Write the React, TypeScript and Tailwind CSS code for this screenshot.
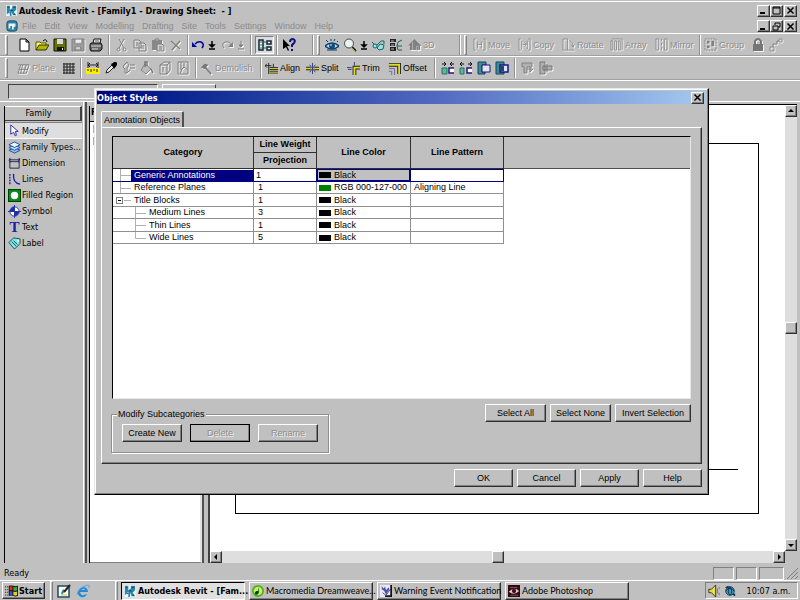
import { useState, type ReactNode } from "react"
import clsx from "clsx"

const raised = "border border-t-white border-l-white border-r-[#303030] border-b-[#303030] shadow-[inset_-1px_-1px_0_#808080]"
const sunken = "border border-t-[#808080] border-l-[#808080] border-r-white border-b-white"
const tahoma = "font-['DejaVu_Sans_Condensed','DejaVu_Sans',sans-serif]"
const msSans = "font-['Liberation_Sans',Arial,sans-serif]"
const disabledText = "text-[#8c8c8c] [text-shadow:1px_1px_0_#f4f4f4]"

type IconName = keyof typeof icons

const icons = {
    newFile: <path d="M3 1h6l3 3v9H3z M9 1v3h3" fill="#fff" stroke="#000" />,
    open: <><path d="M1 12V4h4l1 1h5v2" fill="#ffff60" stroke="#555500" /><path d="M1 12l3-5h10l-3 5z" fill="#b5b500" stroke="#333300" /><path d="M8 3q3-3 4 1" fill="none" stroke="#000" /></>,
    save: <><path d="M1 1h12v12H1z" fill="#6b7300" stroke="#111" /><path d="M4 1h6v5H4z" fill="#d8d8d8" /><path d="M4 9h7v4H4z" fill="#111" /><path d="M9 10h1v2H9z" fill="#fff" /></>,
    saveGray: <><path d="M1 1h12v12H1z M4 1v5h7V1 M4 13V9h6v4" fill="#a0a0a0" stroke="#808080" /><path d="M5 3h5M5 10h4" stroke="#fff" /></>,
    print: <><path d="M4 5l1-4h7l-1 4" fill="#eee" stroke="#111" /><path d="M2 5h10l1 2v4l-2 2H2l-1-2V7z" fill="#666" stroke="#111" /><path d="M2 8h10M3 11h6" stroke="#ddd" /><path d="M6 3h4" stroke="#555" /></>,
    cut: <><path d="M4 1l5 9M9 1L4 10" fill="none" stroke="#808080" /><circle cx="3.500" cy="11.500" r="1.500" fill="none" stroke="#808080" /><circle cx="9.500" cy="11.500" r="1.500" fill="none" stroke="#808080" /></>,
    copy: <path d="M1 2h5l2 2v6H1z M6 5h5l2 2v6H6z M3 5h2M3 7h2M8 8h3M8 10h3" fill="none" stroke="#808080" />,
    paste: <><path d="M1 2h10v10H1z" fill="#888" /><path d="M4 1h4v2H4z" fill="#c0c0c0" stroke="#808080" /><path d="M6 6h5l2 2v5H6z M8 9h3M8 11h3" fill="#ccc" stroke="#808080" /></>,
    remove: <path d="M2 3l9 8M11 3L3 12" stroke="#808080" strokeWidth="1.500" />,
    undo: <><path d="M4 6q3-3 6-2q4 2 1 6" fill="none" stroke="#0000a0" strokeWidth="1.500" /><path d="M1 4v5h5z" fill="#0000a0" /></>,
    redo: <><path d="M11 7Q10 3 5 4Q1 6 4 10" fill="none" stroke="#808080" /><path d="M13 4v5H8z" fill="#808080" /></>,
    down: <path d="M7 3v4M5 7h4L7 9zM4 11h6" fill="#000" stroke="#000" strokeWidth="1.500" />,
    downGray: <path d="M7 3v4M5 7h4L7 9zM4 11h6" fill="#808080" stroke="#808080" />,
    tree: <><path d="M1 2h4v10H1z M9 3h4v3H9z M9 9h4v3H9z" fill="#fff" stroke="#123" strokeWidth="1.500" /><path d="M6 4h3M6 10h3M2 4h2M2 7h2M2 10h2" stroke="#0b6b60" /></>,
    help: <><path d="M1 1v10l3-2 2 4 1-1-2-4h3z" fill="#000" /><path d="M8 4q0-3 3-3q3 1 1 4l-2 2v2M10 11v2" fill="none" stroke="#101080" strokeWidth="2" /></>,
    eye: <><path d="M0 8q7-6 14 0q-7 6-14 0z" fill="#c9e9f5" stroke="#103e66" strokeWidth="1.500" /><circle cx="7" cy="8" r="3" fill="#124b80" /><circle cx="6" cy="7" r="1" fill="#7fc8e8" /><path d="M3 4L1 2M6 3V1M9 3l1-2M12 4l1-1M2 12h10" stroke="#103e66" /></>,
    magnifier: <><path d="M9 9l4 4" stroke="#222" strokeWidth="2" /><circle cx="6" cy="5.500" r="4.500" fill="#e8f4f0" stroke="#444" /><path d="M8 9l4 4" stroke="#b59a20" /></>,
    glasses: <><path d="M1 4l3 3M6 7l4-4h3v3" fill="none" stroke="#0a6b6b" /><circle cx="4" cy="8" r="2" fill="#9fe0dd" stroke="#0a6b6b" /><path d="M6 10l3-4 4 1-1 4-4 1z" fill="#9fe0dd" stroke="#0a6b6b" /></>,
    details: <><path d="M1 1h6v3H1zM1 5h5v3H1zM1 9h6v4H1z" fill="#222" /><path d="M13 2L9 4l-1 4 1 4M8 8h5M9 12h4" fill="none" stroke="#156058" /><path d="M2 3h3M2 7h3M2 11h3" stroke="#bbb" /></>,
    house: <><path d="M0 8l7-7 7 7-1 1v4H2V8z" fill="#808080" /><path d="M5 4v9M9 9h2v4H9z" stroke="#b5b5b5" fill="#666" /></>,
    move: <path d="M3 1H1v12h2M11 1h2v12h-2M5 4v7M9 4v7M5 7h4" fill="none" stroke="#909090" />,
    copyTool: <path d="M3 1H1v12h2M11 1h2v12h-2M4 3v9M10 3v9M5 7h4M7 5l2 2-2 2" fill="none" stroke="#909090" />,
    rotate: <path d="M1 1v12h12M1 1h5v12M8 3q4 1 4 7M10 8l2 2 1-3" fill="none" stroke="#909090" />,
    array: <path d="M1 3h2v10H1zM5 3h2v10H5zM9 3h2v10H9zM2 1h11v12" fill="none" stroke="#909090" />,
    mirror: <path d="M4 1H1v12h3zM10 1h3v12h-3zM7 1v2M7 5v3M7 10v3" fill="none" stroke="#909090" />,
    group: <><path d="M1 1h12v12H1z" fill="none" stroke="#808080" strokeDasharray="2 1" /><path d="M3 3h3v3H3zM8 3h3v6H8zM3 8h3v3H3z" fill="#808080" /></>,
    lock: <><path d="M2 6h10v7H2z" fill="#777" /><path d="M4 6V3q3-4 6 0v3" fill="none" stroke="#777" strokeWidth="2" /></>,
    link: <><path d="M1 9h4v4H1zM10 1h3v3h-3z" fill="none" stroke="#909090" /><path d="M4 9V6h4V3h2" fill="none" stroke="#808080" /></>,
    plane: <path d="M1 12L4 3h9l-3 9zM3 8h9M6 3L4 12M10 3L7 12M1 3h3" fill="none" stroke="#808080" />,
    grid: <path d="M1 3h12M1 6h12M1 9h12M1 12h12M2 2v11M5 2v11M8 2v11M11 2v11" stroke="#222" fill="none" />,
    ruler: <><path d="M0 7h14v6H0z" fill="#ffee00" /><path d="M2 1v6M12 1v6M2 4h10M4 2L2 4l2 2M10 2l2 2-2 2M2 8v2M5 8v3M8 8v2M11 8v3" fill="none" stroke="#222" /></>,
    dropper: <><path d="M2 12l1-3 5-5 2 2-5 5z" fill="#eee" stroke="#222" /><path d="M7 3l2-1 1-1h2l1 1v2l-3 4z" fill="#000" /></>,
    matchProps: <path d="M2 4l3-3 2 3-2 3v5H3V8L1 6zM8 4h5M8 7h5M5 12l3-3" fill="none" stroke="#808080" />,
    paint: <><path d="M5 3l6 5-5 5-5-4z" fill="#bbb" stroke="#808080" /><path d="M5 6V1h2v4M11 8l2 4" fill="none" stroke="#777" strokeWidth="1.500" /></>,
    linework: <path d="M2 4l4-3h6v8l-3 4H2zM2 4h7v9M9 4l3-3M5 6v5" fill="none" stroke="#808080" />,
    section: <path d="M2 1h10v12H2zM5 1v8l3-3 4 3M4 12l2-3M8 2v4" fill="none" stroke="#808080" />,
    hammer: <><path d="M1 6l4-4 4 1-2 2-1 3z" fill="#777" /><path d="M6 6l6 7" stroke="#808080" strokeWidth="2" /></>,
    align: <><path d="M4 1v12M0 4h7M9 2v4M0 4l2-2M0 4l2 2" stroke="#222" fill="none" /><path d="M5 7h9M5 11h9" stroke="#333" strokeWidth="3" /><path d="M5 7h9M5 11h9" stroke="#e0dc20" /></>,
    split: <><path d="M0 7h5M9 7h5" stroke="#222" strokeWidth="4" /><path d="M0 7h5M9 7h5" stroke="#e0dc20" strokeWidth="1.500" /><path d="M7 1v12M4 3l6 8M10 3L4 11" stroke="#333a80" /></>,
    trim: <><path d="M8 14V6h6" fill="none" stroke="#222" strokeWidth="4" /><path d="M8 14V6h6" fill="none" stroke="#e0dc20" strokeWidth="2" /><path d="M0 6h5M8 0v4M1 8h4" stroke="#333a80" /></>,
    offset: <><path d="M1 3h11v10" fill="none" stroke="#222" strokeWidth="4" /><path d="M1 3h11v10" fill="none" stroke="#e0dc20" strokeWidth="2" /><path d="M1 7h6v7M1 10h3v4" fill="none" stroke="#706a90" /></>,
    attach: <><path d="M1 3h4M13 3H9M3 1l2 2-2 2M11 1L9 3l2 2" fill="none" stroke="#111" /><path d="M1 7h5v6H1z" fill="#58b89a" stroke="#28705c" /><path d="M13 7H8v5h5" fill="#fff" stroke="#201880" strokeWidth="1.500" /></>,
    detach: <><path d="M1 3h4M13 3H9M3 1L1 3l2 2M11 1l2 2-2 2" fill="none" stroke="#111" /><path d="M1 7h4v6H1z" fill="#58b89a" stroke="#28705c" /><path d="M13 7H8v5h5" fill="#fff" stroke="#201880" strokeWidth="1.500" /></>,
    join: <><path d="M1 1h8v3H5v7h3v2H1z" fill="#3b8d92" stroke="#18406a" /><path d="M5 4h8v7H5z" fill="#e4e4ea" stroke="#181880" /></>,
    joinFull: <><path d="M1 1h8v12H1z" fill="#3b8d92" stroke="#18406a" /><path d="M5 4h8v7H5z" fill="#d8e8f0" stroke="#181880" strokeWidth="1.500" /><path d="M5 5h4v5H5z" fill="#24407f" /></>,
    cutGeo: <path d="M1 2h10v4H6v6H3V6H1zM6 8h3M9 5v6l3-3" fill="#b0b0b0" stroke="#808080" />,
    uncutGeo: <path d="M1 1h5v12H1zM4 5h9v4H4zM8 3v8" fill="#b0b0b0" stroke="#777" />,
    modify: <path d="M3 1v10l3-2 2 4 1-1-1-4h3z" fill="#fff" stroke="#2020a0" />,
    types: <><path d="M1 10l6-3 6 3-6 3z" fill="#8dc6e8" stroke="#2046a0" /><path d="M1 7l6-3 6 3-6 3z" fill="#b9e2f2" stroke="#2046a0" /><path d="M1 4l6-3 6 3-6 3z" fill="#e5f5fb" stroke="#2046a0" /></>,
    dimension: <path d="M2 5h10v7H2zM2 1v5M12 1v5M1 3h12M3 2L1 4M13 2l-2 2" fill="none" stroke="#222250" />,
    lines: <><path d="M2 1v12" stroke="#2020a0" strokeDasharray="2 1" strokeWidth="1.500" /><path d="M6 1q-1 10 7 11" fill="none" stroke="#2020a0" strokeWidth="1.500" /></>,
    filled: <><path d="M0 0h14v14H0z" fill="#068a18" stroke="#013d06" strokeWidth="2" /><circle cx="7" cy="7" r="4" fill="#fff" /></>,
    symbol: <><circle cx="7" cy="7" r="5" fill="#fff" stroke="#2030a0" /><path d="M7 2a5 5 0 0 0-5 5h5zM7 12a5 5 0 0 0 5-5H7z" fill="#2030a0" /><path d="M7 0v14M0 7h14" stroke="#2030a0" /></>,
    label: <><path d="M1 6l5-5 7 1v5l-6 6z" fill="#86e4e0" stroke="#0b5160" /><path d="M4 5l5 5M6 4l4 4" stroke="#0b5160" /><circle cx="11" cy="4" r="1" fill="#fff" /></>,
    revit: <><path d="M0 0h14v14H0z" fill="#e9f5fa" /><path d="M1 1h4v5l3-2V1h5v5l-3 3 3 4h-4l-2-4v5H5V8L1 12z" fill="#2f86a8" /><path d="M2 3h2M9 3h3M6 7h3M3 10h2M10 12h2" stroke="#103f66" /></>,
    sheet: <><rect x="1" y="1" width="12" height="12" rx="3" fill="#2d83a5" stroke="#174a64" /><path d="M3 4h8v4H9v3H7V7H5v3H3z" fill="#e9f5fa" /></>,
    windows: <><path d="M4 2q3-1 5 0t5 0v11q-3 1-5 0t-5 0z" fill="#111" /><path d="M5 3q2-1 3 0v4q-1-1-3 0z" fill="#e03020" /><path d="M9 3q2 1 4 0v4q-2 1-4 0z" fill="#30b030" /><path d="M5 8q2-1 3 0v4q-1-1-3 0z" fill="#3050e0" /><path d="M9 8q2 1 4 0v4q-2 1-4 0z" fill="#e8d020" /><path d="M0 3h3M0 6h3M0 9h3M0 12h3" stroke="#a01818" strokeDasharray="1 1" strokeWidth="1.500" /></>,
    desktop: <><path d="M1 2h11v11H1z" fill="#fffde5" stroke="#204a68" strokeWidth="1.500" /><path d="M4 9l2-4 2 2-3 4z" fill="#2b8db0" /><path d="M7 8l6-7" stroke="#222" strokeWidth="2" /><path d="M4 11h6" stroke="#d0c040" /></>,
    ie: <><path d="M12 8H4q1 4 4 3l3-1q-2 4-6 3Q1 11 2 7q2-4 6-4q4 1 4 5zM5 6h4q-1-2-2-1z" fill="#2389d8" /><path d="M1 11Q2 3 12 1q2 0 1 3" fill="none" stroke="#58a9df" /></>,
    dreamweaver: <><circle cx="7" cy="7" r="7" fill="#4caf21" /><circle cx="7" cy="7" r="5" fill="#c5f060" /><path d="M8 2v7q-1 3-4 2q-2-2 1-4h2z" fill="#0b4420" /></>,
    warning: <><path d="M0 0h14v14H0z" fill="#e9e9f4" /><path d="M2 1l2 3 2-2 1 4 3-3 1 2-4 6-2-4-3-2z" fill="#5050a8" /><path d="M3 9l4 3 5-7" fill="none" stroke="#3b3b88" /><path d="M13 0v13H6" fill="none" stroke="#111" strokeWidth="2" /></>,
    photoshop: <><path d="M0 0h14v14H0z" fill="#2a0b12" /><path d="M1 8q6-7 12-1q-6 6-12 1z" fill="#e5c8c8" /><circle cx="7" cy="7" r="2.500" fill="#401020" /><path d="M2 3h9M3 12h9" stroke="#b05060" /></>,
    speaker: <><path d="M1 5h3l5-5v14L4 9H1z" fill="#e8e040" stroke="#222" /><path d="M11 4v6M13 2v3M13 9v3" stroke="#777" /></>,
    globe: <><circle cx="7" cy="7" r="5" fill="#3f9ab5" stroke="#14324d" /><path d="M2 7q5-6 10 0M7 2q-4 6 0 10M7 2q4 6 0 10" fill="none" stroke="#102a50" /><path d="M1 3l4-2 1 3zM9 11l4-1v3z" fill="#102a50" /></>,
}

const Icon = ({ name, size = "size-[14px]" }: { name: IconName; size?: string }) => (
    <svg viewBox="0 0 14 14" className={clsx("shrink-0", size)} aria-hidden="true">{icons[name]}</svg>
)

interface ToolProps {
    icon: IconName;
    title: string;
    label?: string;
    off?: boolean;
    className?: string;
}

const Tool = ({ icon, title, label, off, className = "w-[18px]" }: ToolProps) => (
    <button
        aria-label={title}
        disabled={off}
        className={clsx("flex h-[18px] shrink-0 items-center whitespace-nowrap", label ? "gap-[2px]" : "justify-center", off && disabledText, className)}>
        <span className={clsx("flex", off && "drop-shadow-[1px_1px_0_#f4f4f4]")}>
            <Icon name={icon} size={label ? "size-[13px]" : undefined} />
        </span>
        {label}
    </button>
)

const Sep = ({ className = "w-2" }: { className?: string }) => (
    <span className={clsx("flex h-5 shrink-0 justify-center", className)}>
        <span className="w-[2px] border-l border-[#909090] border-r border-r-white" />
    </span>
)

const Grip = () => <span className="ml-[2px] h-5 w-[3px] shrink-0 border border-t-white border-r-[#808080] border-b-[#808080] border-l-white" />

const Bar = ({ children, className }: { children: ReactNode; className?: string }) => (
    <div className={clsx("flex shrink-0 items-center", className)}>{children}</div>
)

interface PushProps {
    children: ReactNode;
    className?: string;
    disabled?: boolean;
    focus?: boolean;
}

const Push = ({ children, className = "w-[60px]", disabled, focus }: PushProps) => (
    <button
        disabled={disabled}
        className={clsx("h-[18px] shrink-0 text-center whitespace-nowrap", raised, className, disabled && disabledText, focus && "outline outline-black -outline-offset-1")}>
        {children}
    </button>
)

const CaptionButton = ({ kind }: { kind: "Minimize" | "Maximize" | "Restore" | "Close" }) => (
    <button aria-label={kind} className={clsx("flex h-3 w-[13px] items-center justify-center bg-[#c0c0c0]", raised)}>
        <svg viewBox="0 0 9 9" className="size-[9px]" fill="none" stroke="#000">
            {kind === "Minimize" && <path d="M1 7h5" strokeWidth="2" />}
            {kind === "Maximize" && <path d="M1 1h7v7H1zM1 2h7" />}
            {kind === "Restore" && <path d="M3 1h5v4H6M3 1v2M1 4h5v4H1z" />}
            {kind === "Close" && <path d="M1.500 1.500l6 6M7.500 1.500l-6 6" strokeWidth="1.500" />}
        </svg>
    </button>
)

const arrows = {
    up: "M2 6h6L5 3z",
    down: "M2 4h6L5 7z",
    left: "M6 2v6L3 5z",
    right: "M4 2v6l3-3z",
}

const ScrollArrow = ({ dir }: { dir: keyof typeof arrows }) => (
    <button aria-label={`Scroll ${dir}`} className={clsx("flex size-3 shrink-0 items-center justify-center bg-[#c0c0c0]", raised)}>
        <svg viewBox="0 0 10 10" className="size-[10px]"><path d={arrows[dir]} /></svg>
    </button>
)

const menus = ["File", "Edit", "View", "Modelling", "Drafting", "Site", "Tools", "Settings", "Window", "Help"]

const palette: { icon?: IconName; label: string }[] = [
    { icon: "modify", label: "Modify" },
    { icon: "types", label: "Family Types..." },
    { icon: "dimension", label: "Dimension" },
    { icon: "lines", label: "Lines" },
    { icon: "filled", label: "Filled Region" },
    { icon: "symbol", label: "Symbol" },
    { label: "Text" },
    { icon: "label", label: "Label" },
]

interface CategoryRow {
    name: string;
    weight: number;
    color: string;
    pattern?: string;
    level: number;
    last?: boolean;
}

const rows: CategoryRow[] = [
    { name: "Generic Annotations", weight: 1, color: "Black", level: 0 },
    { name: "Reference Planes", weight: 1, color: "RGB 000-127-000", pattern: "Aligning Line", level: 0 },
    { name: "Title Blocks", weight: 1, color: "Black", level: 0 },
    { name: "Medium Lines", weight: 3, color: "Black", level: 1 },
    { name: "Thin Lines", weight: 1, color: "Black", level: 1 },
    { name: "Wide Lines", weight: 5, color: "Black", level: 1, last: true },
]

const TreeLines = ({ row }: { row: CategoryRow }) => (
    <svg className={clsx("h-3 shrink-0", row.level ? "w-[33px]" : "w-[18px]")} fill="none" stroke="#b0b0b0" aria-hidden="true">
        {row.level === 0 && row.name !== "Title Blocks" && <path d="M7.500 0v12M7.500 6.500H18" />}
        {row.name === "Title Blocks" && <>
            <path d="M11 6.500h7" />
            <rect x="3.500" y="3.500" width="6" height="6" stroke="#808080" fill="#fff" />
            <path d="M5 6.500h3" stroke="#000" />
        </>}
        {row.level === 1 && <path d={row.last ? "M22.500 0v6.500H33" : "M22.500 0v12M22.500 6.500H33"} />}
    </svg>
)

const ObjectStyles = () => {
    const [selected, setSelected] = useState(0)
    const th = "border-r border-b border-[#303030] bg-[#c0c0c0] p-0 text-center align-middle"

    return (
        <section role="dialog" aria-label="Object Styles" className={clsx("absolute top-[88px] right-[91px] left-[94px] bg-[#c0c0c0] p-[2px]", msSans, "border border-t-[#e8e8e8] border-l-[#e8e8e8] border-r-black border-b-black shadow-[inset_-1px_-1px_0_#808080,inset_1px_1px_0_#fff]")}>
            <header className={clsx("flex h-[13px] items-center justify-between bg-linear-to-r from-[#000080] via-[#5068c0] via-55% to-[#a6caf0] pr-[2px] font-bold text-white", tahoma)}>
                <h2>Object Styles</h2>
                <CaptionButton kind="Close" />
            </header>

            <div className="px-1 pt-[7px] pb-[5px]">
                <button role="tab" aria-selected="true" className="block h-4 w-[83px] rounded-t-[2px] border-t border-r-2 border-l border-t-white border-r-[#505050] border-l-white text-center whitespace-nowrap">
                    Annotation Objects
                </button>

                <div className="border border-t-white border-r-[#303030] border-b-[#303030] border-l-white px-[10px] pt-2 pb-[10px] shadow-[inset_-1px_-1px_0_#808080]">
                    <div className="h-[263px] border border-t-black border-r-[#e8e8e8] border-b-[#e8e8e8] border-l-black bg-white">
                        <table className="w-full table-fixed border-separate border-spacing-0 leading-[11px]">
                            <colgroup>
                                <col className="w-[141px]" />
                                <col className="w-[63px]" />
                                <col className="w-[94px]" />
                                <col className="w-[93px]" />
                                <col />
                            </colgroup>
                            <thead className="font-bold">
                                <tr className="h-4">
                                    <th rowSpan={2} className={th}>Category</th>
                                    <th className={th}>Line Weight</th>
                                    <th rowSpan={2} className={th}>Line Color</th>
                                    <th rowSpan={2} className={th}>Line Pattern</th>
                                    <td rowSpan={2} className="border-b border-[#505050] bg-[#c0c0c0]" />
                                </tr>
                                <tr className="h-4">
                                    <th className={th}>Projection</th>
                                </tr>
                            </thead>
                            <tbody>
                                {rows.map((row, i) => {
                                    const active = i === selected
                                    const td = clsx("overflow-hidden border-r border-b p-0 whitespace-nowrap", active ? "border-[#000080]" : "border-[#909090]")
                                    return (
                                        <tr key={row.name} onClick={() => setSelected(i)} className="odd:h-[13px] even:h-3">
                                            <td className={td}>
                                                <div className="flex h-[11px] items-center">
                                                    <TreeLines row={row} />
                                                    <span className={clsx("grow pl-[3px]", active && "bg-[#000080] text-white")}>{row.name}</span>
                                                </div>
                                            </td>
                                            <td className={clsx(td, active ? "pl-[2px]" : "pl-1")}>{row.weight}</td>
                                            <td className={clsx(td, active && "bg-[#c0c0c0] shadow-[inset_0_0_0_1px_#000080]")}>
                                                <div className="flex h-[11px] items-center gap-[3px] pl-[2px]">
                                                    <span className={clsx("h-[6px] w-3 shrink-0", row.color === "Black" ? "bg-black" : "bg-[#008000]")} />
                                                    {row.color}
                                                </div>
                                            </td>
                                            <td className={clsx(td, "pl-[3px]", active && "shadow-[inset_0_1px_0_#000080]")}>{row.pattern}</td>
                                            <td className="p-0" />
                                        </tr>
                                    )
                                })}
                            </tbody>
                        </table>
                    </div>

                    <div className="flex items-start justify-between pt-[5px]">
                        <fieldset className="mt-1 -ml-px flex gap-2 border border-[#909090] px-[10px] pt-1 pb-[10px] shadow-[1px_1px_0_#fff,inset_1px_1px_0_#fff]">
                            <legend className="-ml-[5px] bg-[#c0c0c0] px-px leading-3">Modify Subcategories</legend>
                            <Push>Create New</Push>
                            <Push disabled focus>Delete</Push>
                            <Push disabled>Rename</Push>
                        </fieldset>
                        <div className="flex gap-1">
                            <Push className="w-[61px]">Select All</Push>
                            <Push className="w-[61px]">Select None</Push>
                            <Push className="w-[76px]">Invert Selection</Push>
                        </div>
                    </div>
                </div>

                <footer className="flex justify-end gap-1 pt-[5px]">
                    <Push className="w-[59px]">OK</Push>
                    <Push className="w-[59px]">Cancel</Push>
                    <Push className="w-[59px]">Apply</Push>
                    <Push className="w-[59px]">Help</Push>
                </footer>
            </div>
        </section>
    )
}

const Task = ({ icon, children, active }: { icon: IconName; children: ReactNode; active?: boolean }) => (
    <button className={clsx("flex h-[18px] w-[124px] items-center gap-[2px] px-[2px] whitespace-nowrap", active ? "border border-t-black border-r-white border-b-white border-l-black bg-[#e0e0e0] font-bold" : clsx(raised, "font-[Lato,sans-serif]"))}>
        <Icon name={icon} size="size-3" />
        {children}
    </button>
)

export default function App() {
    return (
        <main className={clsx("relative flex h-screen min-h-[560px] flex-col overflow-hidden bg-[#c0c0c0] text-[9px] leading-3 text-black", tahoma)}>
            {/* Title bar and menu */}
            <Bar className="mt-px h-[18px] justify-between border-t border-white pr-[3px] pl-[6px]">
                <div className="flex items-center gap-[2px]">
                    <Icon name="revit" size="size-[11px]" />
                    <h1 className="font-bold whitespace-pre">Autodesk Revit - [Family1 - Drawing Sheet:  - ]</h1>
                </div>
                <div className="flex">
                    <CaptionButton kind="Minimize" />
                    <CaptionButton kind="Maximize" />
                    <span className="w-px" />
                    <CaptionButton kind="Close" />
                </div>
            </Bar>
            <Bar className="h-[14px] justify-between pr-[3px] pl-[6px]">
                <nav className={clsx("flex items-center gap-2 text-[#8c8c8c]", msSans)}>
                    <span className="-mr-1"><Icon name="sheet" size="size-3" /></span>
                    {menus.map((m) => <button key={m}>{m}</button>)}
                </nav>
                <div className="flex">
                    <CaptionButton kind="Minimize" />
                    <CaptionButton kind="Restore" />
                    <span className="w-px" />
                    <CaptionButton kind="Close" />
                </div>
            </Bar>

            {/* Toolbars */}
            <Bar className={clsx("h-[23px] border-t border-b border-t-white border-b-[#a0a0a0] pl-[3px]", msSans)}>
                <Bar className="w-[308px]">
                    <Grip />
                    <span className="w-[7px]" />
                    <Tool icon="newFile" title="New" />
                    <Tool icon="open" title="Open" />
                    <Tool icon="save" title="Save" />
                    <Tool icon="saveGray" title="Save to central" off />
                    <Tool icon="print" title="Print" />
                    <Sep />
                    <Tool icon="cut" title="Cut" off />
                    <Tool icon="copy" title="Copy" off />
                    <Tool icon="paste" title="Paste" off />
                    <Tool icon="remove" title="Delete" off />
                    <Sep className="w-[6px]" />
                    <Tool icon="undo" title="Undo" className="w-[14px]" />
                    <Tool icon="down" title="Undo list" className="w-[14px]" />
                    <Tool icon="redo" title="Redo" off className="w-4" />
                    <Tool icon="downGray" title="Redo list" off className="w-3" />
                    <Sep />
                    <Tool icon="tree" title="Project browser" className="w-[19px] border border-t-[#808080] border-r-white border-b-white border-l-[#808080] bg-[#dcdcdc]" />
                    <Sep className="w-[6px]" />
                    <Tool icon="help" title="Context help" />
                </Bar>
                <Bar className="w-[147px]">
                    <Sep className="w-1" />
                    <Grip />
                    <span className="w-[3px]" />
                    <Tool icon="eye" title="View" />
                    <Tool icon="magnifier" title="Zoom" />
                    <Tool icon="down" title="Zoom list" className="w-[10px]" />
                    <Tool icon="glasses" title="Hide" />
                    <Tool icon="details" title="Details" />
                    <span className="w-[3px]" />
                    <Tool icon="house" title="Default 3D view" label="3D" off className="w-8" />
                </Bar>
                <Bar>
                    <Sep className="w-1" />
                    <Grip />
                    <span className="w-[6px]" />
                    <Tool icon="move" title="Move" label="Move" off className="w-[45px]" />
                    <Tool icon="copyTool" title="Copy elements" label="Copy" off className="w-[44px]" />
                    <Tool icon="rotate" title="Rotate" label="Rotate" off className="w-[48px]" />
                    <Tool icon="array" title="Array" label="Array" off className="w-[45px]" />
                    <Tool icon="mirror" title="Mirror" label="Mirror" off className="w-[41px]" />
                    <Sep />
                    <Tool icon="group" title="Group" label="Group" off className="w-[45px]" />
                    <Tool icon="lock" title="Lock" off />
                    <Tool icon="link" title="Link" off />
                </Bar>
            </Bar>
            <Bar className={clsx("h-6 border-t border-b border-t-white border-b-[#a0a0a0] pl-[3px]", msSans)}>
                <Grip />
                <span className="w-[9px]" />
                <Tool icon="plane" title="Work plane" label="Plane" off className="w-[43px]" />
                <Tool icon="grid" title="Work plane grid" />
                <Sep className="w-[6px]" />
                <Tool icon="ruler" title="Measure" />
                <Tool icon="dropper" title="Match" />
                <Tool icon="matchProps" title="Match properties" off />
                <Tool icon="paint" title="Paint" off />
                <Tool icon="linework" title="Linework" off />
                <Tool icon="section" title="Split face" off />
                <Sep />
                <Tool icon="hammer" title="Demolish" label="Demolish" off className="w-[57px]" />
                <Sep />
                <Tool icon="align" title="Align" label="Align" className="w-[41px]" />
                <Tool icon="split" title="Split" label="Split" className="w-[41px]" />
                <Tool icon="trim" title="Trim" label="Trim" className="w-[41px]" />
                <Tool icon="offset" title="Offset" label="Offset" className="w-[43px]" />
                <Sep />
                <Tool icon="attach" title="Attach" />
                <Tool icon="detach" title="Detach" />
                <Tool icon="join" title="Join geometry" />
                <Tool icon="joinFull" title="Unjoin geometry" />
                <Sep />
                <Tool icon="cutGeo" title="Cut geometry" off />
                <Tool icon="uncutGeo" title="Uncut geometry" off />
            </Bar>

            {/* Type selector */}
            <Bar className="h-[21px] border-t border-white pl-2">
                <select aria-label="Type selector" disabled className="h-[15px] w-[150px] appearance-none border border-t-[#404040] border-r-white border-b-white border-l-[#404040]" />
                <span className="ml-1 h-[15px] w-[54px] border border-t-white border-r-[#404040] border-b-[#808080] border-l-white" />
            </Bar>

            <div className="flex min-h-0 grow border-t border-white pr-[3px] pl-1">
                {/* Family palette */}
                <aside className="mt-1 w-[78px] shrink-0 border-l border-black">
                    <h2 className="h-[15px] border-t border-r-2 border-b border-t-white border-r-[#404040] border-b-[#404040] pr-2 text-center">Family</h2>
                    <div className="flex flex-col pt-px">
                        {palette.map((item, i) => (
                            <button key={item.label} className={clsx("flex items-center gap-px pl-[3px] text-left whitespace-nowrap", i === 0 ? "h-[17px] border-t border-b border-t-[#808080] border-b-white bg-[#dedede]" : "h-4")}>
                                {item.icon
                                    ? <Icon name={item.icon} size="size-[13px]" />
                                    : <span className="w-[13px] text-center font-['Liberation_Serif',serif] text-[15px] font-bold text-[#2020a0]">T</span>}
                                {item.label}
                            </button>
                        ))}
                    </div>
                </aside>
                <span className="ml-px w-1 border-r-2 border-l border-r-[#505050] border-l-white" />

                {/* Project browser */}
                <section className="mt-1 ml-[2px] flex w-[115px] shrink-0 flex-col border-r-2 border-l border-r-[#505050] border-l-black">
                    <h2 className="h-[15px] pl-px font-bold">F</h2>
                    <div className="flex grow flex-col gap-1 border-t border-r-2 border-b border-t-black border-r-[#e0e0e0] border-b-[#808080] bg-white pt-[3px] pl-[3px]">
                        <span className="size-2 border border-[#b0b0b0]" />
                        <span className="size-2 border border-[#b0b0b0]" />
                    </div>
                </section>

                {/* Drawing view */}
                <section className="mt-[2px] ml-1 flex min-w-0 grow flex-col border-t border-l-2 border-t-black border-l-[#404040]">
                    <div className="flex min-h-0 grow">
                        <div className="flex min-w-0 grow bg-white pt-[38px] pr-[26px] pb-[37px] pl-[25px]">
                            <div className="flex grow items-end border border-black pr-5 pb-[43px]">
                                <span className="h-px grow bg-black" />
                            </div>
                        </div>
                        <div className="flex w-3 shrink-0 flex-col items-center bg-[#dedede]">
                            <ScrollArrow dir="up" />
                            <span className="grow" />
                            <span className={clsx("size-3 bg-[#c0c0c0]", raised)} />
                            <span className="grow" />
                            <ScrollArrow dir="down" />
                        </div>
                    </div>
                    <div className="flex h-3 shrink-0 bg-[#dedede]">
                        <ScrollArrow dir="left" />
                        <span className="grow" />
                        <span className={clsx("size-3 bg-[#c0c0c0]", raised)} />
                        <span className="grow" />
                        <ScrollArrow dir="right" />
                        <span className="w-3 bg-[#c0c0c0]" />
                    </div>
                </section>
            </div>

            {/* Status bar */}
            <Bar className="mt-[3px] h-[14px] gap-[2px] pr-[2px] pl-1">
                <span className="grow">Ready</span>
                <span className={clsx("h-[13px] w-[21px]", sunken)} />
                <span className={clsx("h-[13px] w-[21px]", sunken)} />
                <span className={clsx("h-[13px] w-[25px]", sunken)} />
                <svg viewBox="0 0 12 12" className="size-3" stroke="#808080"><path d="M1 12L12 1M5 12l7-7M9 12l3-3" /></svg>
            </Bar>

            {/* Taskbar */}
            <Bar className="h-5 gap-[3px] border-t border-white pr-[2px] pl-[2px]">
                <button className={clsx("flex h-[17px] w-[43px] items-center gap-px pl-[2px] font-bold", raised)}>
                    <Icon name="windows" size="size-[13px]" />
                    Start
                </button>
                <Grip />
                <div className="ml-px flex w-[53px] gap-[5px]">
                    <Icon name="desktop" />
                    <Icon name="ie" />
                </div>
                <Grip />
                <nav className="flex grow gap-1">
                    <Task icon="revit" active>Autodesk Revit - [Fam...</Task>
                    <Task icon="dreamweaver">Macromedia Dreamweave...</Task>
                    <Task icon="warning">Warning Event Notification</Task>
                    <Task icon="photoshop">Adobe Photoshop</Task>
                </nav>
                <div className={clsx("flex h-[17px] w-[93px] items-center gap-1 pl-[2px]", sunken)}>
                    <Icon name="speaker" size="size-3" />
                    <Icon name="globe" size="size-3" />
                    <time className="grow text-center">10:07 a.m.</time>
                </div>
            </Bar>

            <ObjectStyles />
        </main>
    )
}
